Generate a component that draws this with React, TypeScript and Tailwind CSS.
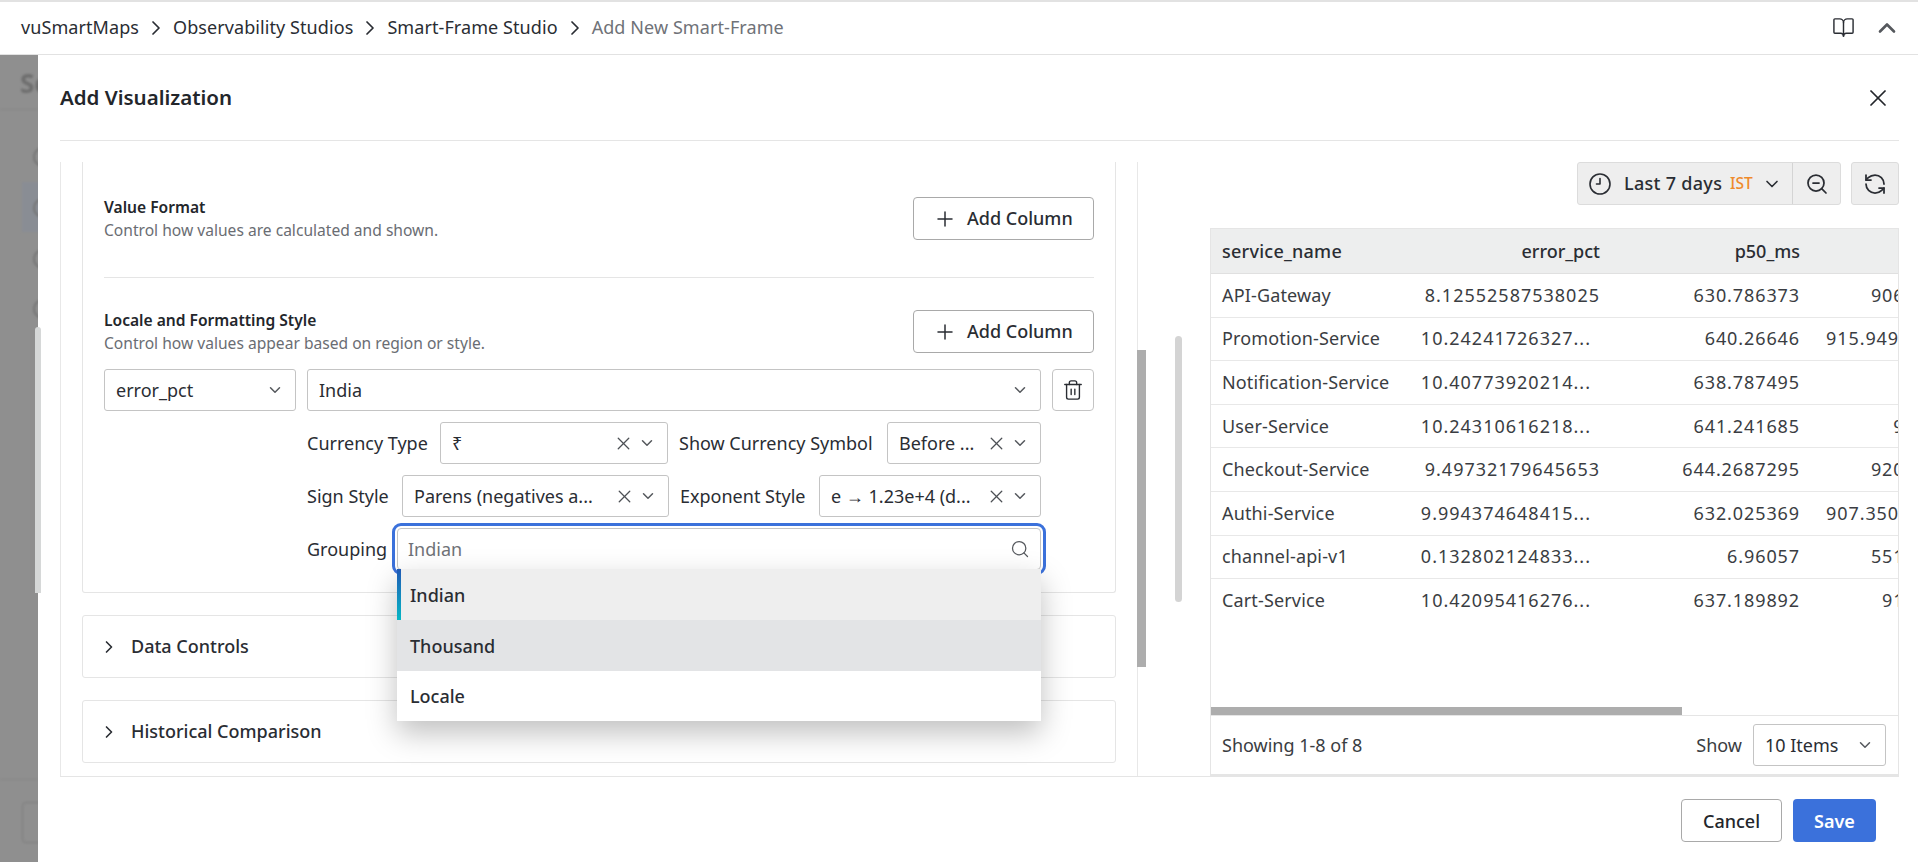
import { BookOpen, ChevronDown, ChevronRight, ChevronUp, Plus, RefreshCcw, Search, Trash2, X, ZoomOut } from 'lucide-react';

const rows = [
  ['API-Gateway', '8.12552587538025', '630.786373', '906.1234'],
  ['Promotion-Service', '10.24241726327...', '640.26646', '915.94961234'],
  ['Notification-Service', '10.40773920214...', '638.787495', ''],
  ['User-Service', '10.24310616218...', '641.241685', '917.12'],
  ['Checkout-Service', '9.49732179645653', '644.2687295', '920.1234'],
  ['Authi-Service', '9.994374648415...', '632.025369', '907.35001234'],
  ['channel-api-v1', '0.132802124833...', '6.96057', '551.1234'],
  ['Cart-Service', '10.42095416276...', '637.189892', '912.123'],
];

function Field({ value, clear, className }: { value: string; clear?: boolean; className: string }) {
  return (
    <div className={`flex items-center h-[42px] border border-[#c4c4c4] rounded-[3px] bg-white pl-[11px] pr-[11px] text-[#2a2d33] ${className}`}>
      <span className="flex-1 truncate">{value}</span>
      {clear && <X className="w-[21px] h-[21px] text-[#4d5055] mr-[4px] shrink-0" strokeWidth={1.5} />}
      <ChevronDown className="w-[18px] h-[18px] text-[#55585d] shrink-0" strokeWidth={2} />
    </div>
  );
}

function AddColumn() {
  return (
    <button className="flex items-center gap-[10px] w-[181px] h-[43px] pl-[19px] border border-[#a9a9a9] rounded-[4px] bg-white text-[18px] font-medium text-[#2a2d33]">
      <Plus className="w-6 h-6" strokeWidth={1.5} />
      Add Column
    </button>
  );
}

function Section({ title }: { title: string }) {
  return (
    <div className="flex items-center h-[63px] border border-[#e5e5e5] rounded-[3px] pl-4 text-[18px] font-medium text-[#2a2d33]">
      <ChevronRight className="w-5 h-5 mr-3" strokeWidth={2} />
      {title}
    </div>
  );
}

export default function App() {
  return (
    <div className="relative h-[862px] w-[1918px] overflow-hidden bg-white font-['Noto_Sans',sans-serif] text-[18px]">
      {/* breadcrumb */}
      <div className="flex items-center h-[55px] border-t-2 border-b border-[#e2e2e2] pl-[21px] pb-[1px] tracking-[0.08px] text-[#2a2d33]">
        <span>vuSmartMaps</span>
        <ChevronRight className="w-6 h-6 mx-[5px]" strokeWidth={1.75} />
        <span>Observability Studios</span>
        <ChevronRight className="w-6 h-6 mx-[5px]" strokeWidth={1.75} />
        <span>Smart-Frame Studio</span>
        <ChevronRight className="w-6 h-6 mx-[5px]" strokeWidth={1.75} />
        <span className="text-[#6f7278]">Add New Smart-Frame</span>
        <BookOpen className="w-[23px] h-[23px] ml-auto" strokeWidth={1.5} />
        <ChevronUp className="w-7 h-7 ml-[18px] mr-[17px] text-[#55585d]" strokeWidth={2.25} />
      </div>

      <div className="flex h-[807px]">
        {/* dimmed page behind the modal */}
        <div className="w-[38px] shrink-0 overflow-hidden bg-[#8f8f8f]">
          <div className="relative h-full w-[38px] blur-[1px]">
            <span className="absolute left-[20px] top-[9px] text-[26px] font-bold text-[#6e6e6e]">Se</span>
            <div className="absolute left-0 top-[54px] w-full border-b border-[#868686]" />
            <div className="absolute left-[22px] top-[127px] w-[40px] h-[50px] bg-[#898d94]" />
            <div className="absolute left-[33px] top-[92px] w-5 h-5 rounded-full border-2 border-[#747474]" />
            <div className="absolute left-[33px] top-[143px] w-5 h-5 rounded-full border-2 border-[#747474]" />
            <div className="absolute left-[33px] top-[194px] w-5 h-5 rounded-full border-2 border-[#747474]" />
            <div className="absolute left-[33px] top-[244px] w-5 h-5 rounded-full border-2 border-[#747474]" />
            <div className="absolute left-0 top-[724px] w-full border-b border-[#868686]" />
            <div className="absolute left-[22px] top-[747px] w-[40px] h-[41px] rounded-[4px] border border-[#7d7d7d]" />
          </div>
        </div>

        <div className="flex-1 flex flex-col bg-white pl-[22px] pr-[19px]">
          <div className="flex items-center justify-between h-[86px] shrink-0 border-b border-[#e5e5e5]">
            <span className="text-[20.5px] font-semibold text-[#23262b]">Add Visualization</span>
            <X className="w-7 h-7 mr-[7px] text-[#23262b]" strokeWidth={1.5} />
          </div>

          <div className="flex h-[615px] mt-[21px] border-b border-[#e5e5e5]">
            {/* left config panel */}
            <div className="flex w-[1078px] shrink-0 border-l border-r border-[#e8e8e8] px-[21px]">
              <div className="w-full">
                <div className="h-[431px] border-l border-r border-b border-[#e5e5e5] rounded-b-[3px] px-[21px] pt-[35px]">
                  <div className="flex items-center justify-between h-[43px]">
                    <div>
                      <div className="text-[15.6px] leading-[23px] font-semibold text-[#23262b]">Value Format</div>
                      <div className="text-[15.6px] leading-[23px] text-[#6a6d73]">Control how values are calculated and shown.</div>
                    </div>
                    <AddColumn />
                  </div>
                  <div className="border-b border-[#e5e5e5] mt-[37px]" />
                  <div className="flex items-center justify-between h-[43px] mt-[32px]">
                    <div>
                      <div className="text-[15.6px] leading-[23px] font-semibold text-[#23262b]">Locale and Formatting Style</div>
                      <div className="text-[15.6px] leading-[23px] text-[#6a6d73]">Control how values appear based on region or style.</div>
                    </div>
                    <AddColumn />
                  </div>
                  <div className="flex gap-[11px] mt-[16px]">
                    <Field value="error_pct" className="w-[192px]" />
                    <Field value="India" className="flex-1" />
                    <div className="flex items-center justify-center w-[42px] h-[42px] border border-[#c4c4c4] rounded-[4px]">
                      <Trash2 className="w-[22px] h-[22px] text-[#2a2d33]" strokeWidth={1.5} />
                    </div>
                  </div>
                  <div className="ml-[203px] mr-[53px] mt-[11px] flex flex-col gap-[11px] text-[#2a2d33]">
                    <div className="flex items-center gap-[11px]">
                      <span className="w-[122px] whitespace-nowrap">Currency Type</span>
                      <Field value="₹" clear className="flex-1" />
                      <span className="w-[197px] whitespace-nowrap">Show Currency Symbol</span>
                      <Field value="Before ..." clear className="w-[154px]" />
                    </div>
                    <div className="flex items-center gap-[11px]">
                      <span className="w-[84px] whitespace-nowrap">Sign Style</span>
                      <Field value="Parens (negatives a..." clear className="flex-1" />
                      <span className="w-[128px] whitespace-nowrap">Exponent Style</span>
                      <Field value="e → 1.23e+4 (d..." clear className="w-[222px]" />
                    </div>
                    <div className="flex items-center h-[42px]">
                      <span className="w-[90px] shrink-0 whitespace-nowrap">Grouping</span>
                      <div className="relative flex-1 h-[42px] border border-[#c4c4c4] rounded-[4px] outline-[3px] outline-solid outline-[#3b71db] outline-offset-[2px] flex items-center pl-[10px] pr-[10px]">
                        <span className="flex-1 pt-[1px] text-[#6f7278]">Indian</span>
                        <Search className="w-5 h-5 text-[#55585d]" strokeWidth={1.5} />
                        {/* open dropdown list */}
                        <div className="absolute z-20 -left-px -right-px top-[40px] bg-white shadow-[0_12px_28px_rgba(0,0,0,0.25)] font-medium">
                          <div className="relative flex items-center h-[51px] pl-[13px] pt-[2px] bg-[#eeeeee]">
                            <div className="absolute left-0 top-0 bottom-0 w-1 bg-gradient-to-b from-[#1f58b4] to-[#06b6c4]" />
                            Indian
                          </div>
                          <div className="flex items-center h-[51px] pl-[13px] pt-[2px] bg-[#e3e4e6]">Thousand</div>
                          <div className="flex items-center h-[50px] pl-[13px] pt-[1px]">Locale</div>
                        </div>
                      </div>
                    </div>
                  </div>
                </div>
                <div className="flex flex-col gap-[22px] mt-[22px]">
                  <Section title="Data Controls" />
                  <Section title="Historical Comparison" />
                </div>
              </div>
            </div>

            {/* preview panel */}
            <div className="relative flex-1 flex flex-col min-w-0">
              <div className="flex justify-end gap-[10px]">
                <div className="flex items-center h-[43px] bg-[#eeeeee] border border-[#dcdcdc] rounded-[3px] text-[#2a2d33]">
                  <div className="flex items-center w-[215px] h-full pl-[10px] border-r border-[#d4d4d4] font-medium whitespace-nowrap">
                    <svg className="w-6 h-6 mr-3 shrink-0" viewBox="0 0 24 24" fill="none" stroke="currentColor" strokeWidth="1.6" strokeLinecap="round" strokeLinejoin="round">
                      <circle cx="12" cy="12" r="10" />
                      <path d="M12 6.5V12H8.5" />
                    </svg>
                    <span className="w-[106px] tracking-[0.3px]">Last 7 days</span>
                    <span className="w-[32px] text-[15.5px] font-medium text-[#ef8a2b]">IST</span>
                    <ChevronDown className="w-5 h-5" strokeWidth={2} />
                  </div>
                  <div className="flex items-center justify-center w-[47px]">
                    <ZoomOut className="w-6 h-6" strokeWidth={1.75} />
                  </div>
                </div>
                <div className="flex items-center justify-center w-[48px] h-[43px] bg-[#eeeeee] border border-[#dcdcdc] rounded-[3px] text-[#2a2d33]">
                  <RefreshCcw className="w-6 h-6" strokeWidth={1.75} />
                </div>
              </div>
              <div className="absolute left-[37px] top-[174px] w-[7px] h-[266px] rounded bg-[#d4d4d4]" />
              <div className="flex flex-col w-[689px] h-[549px] mt-[23px] ml-auto border border-[#e5e5e5] border-b-[2px] text-[#3a3d42]">
                <div className="flex-1 overflow-hidden">
                  <div className="flex items-center h-[45px] bg-[#edeeee] border-b border-[#e0e0e0] font-medium w-[800px] text-[#2a2d33]">
                    <span className="w-[200px] pl-[11px] tracking-[0.25px]">service_name</span>
                    <span className="w-[189px] text-right">error_pct</span>
                    <span className="w-[200px] text-right">p50_ms</span>
                  </div>
                  {rows.map((r, i) => (
                    <div key={r[0]} className={`flex items-center h-[43.6px] w-[800px] ${i < 7 ? 'border-b border-[#e8e8e8]' : ''}`}>
                      <span className="w-[200px] pl-[11px] tracking-[0.15px] whitespace-nowrap">{r[0]}</span>
                      <span className={`w-[189px] text-right tracking-[1px] whitespace-nowrap ${r[1].endsWith('...') ? 'pr-[9px]' : ''}`}>{r[1]}</span>
                      <span className="w-[200px] text-right tracking-[0.9px] whitespace-nowrap">{r[2]}</span>
                      <span className="w-[155px] text-right tracking-[0.9px] whitespace-nowrap">{r[3]}</span>
                    </div>
                  ))}
                </div>
                <div className="h-2 w-[471px] bg-[#adadad]" />
                <div className="flex items-center justify-between h-[59px] border-t border-[#e5e5e5] pl-[11px] pr-[12px]">
                  <span>Showing 1-8 of 8</span>
                  <div className="flex items-center gap-[11px]">
                    <span>Show</span>
                    <Field value="10 Items" className="w-[133px]" />
                  </div>
                </div>
              </div>
            </div>
          </div>

          <div className="flex justify-end gap-[11px] mt-[22px] pr-[23px]">
            <button className="w-[101px] h-[43px] pt-[1px] border border-[#a9a9a9] rounded-[4px] font-medium text-[#23262b]">Cancel</button>
            <button className="w-[83px] h-[43px] pt-[1px] rounded-[4px] bg-[#3b71db] font-semibold text-white">Save</button>
          </div>
        </div>
      </div>

      {/* overlay scrollbars */}
      <div className="absolute left-[35px] top-[327px] w-[6px] h-[266px] rounded-t-[3px] bg-[#d6d8d8]" />
      <div className="absolute left-[1137px] top-[350px] w-[9px] h-[317px] bg-[#adadad]" />
    </div>
  );
}
